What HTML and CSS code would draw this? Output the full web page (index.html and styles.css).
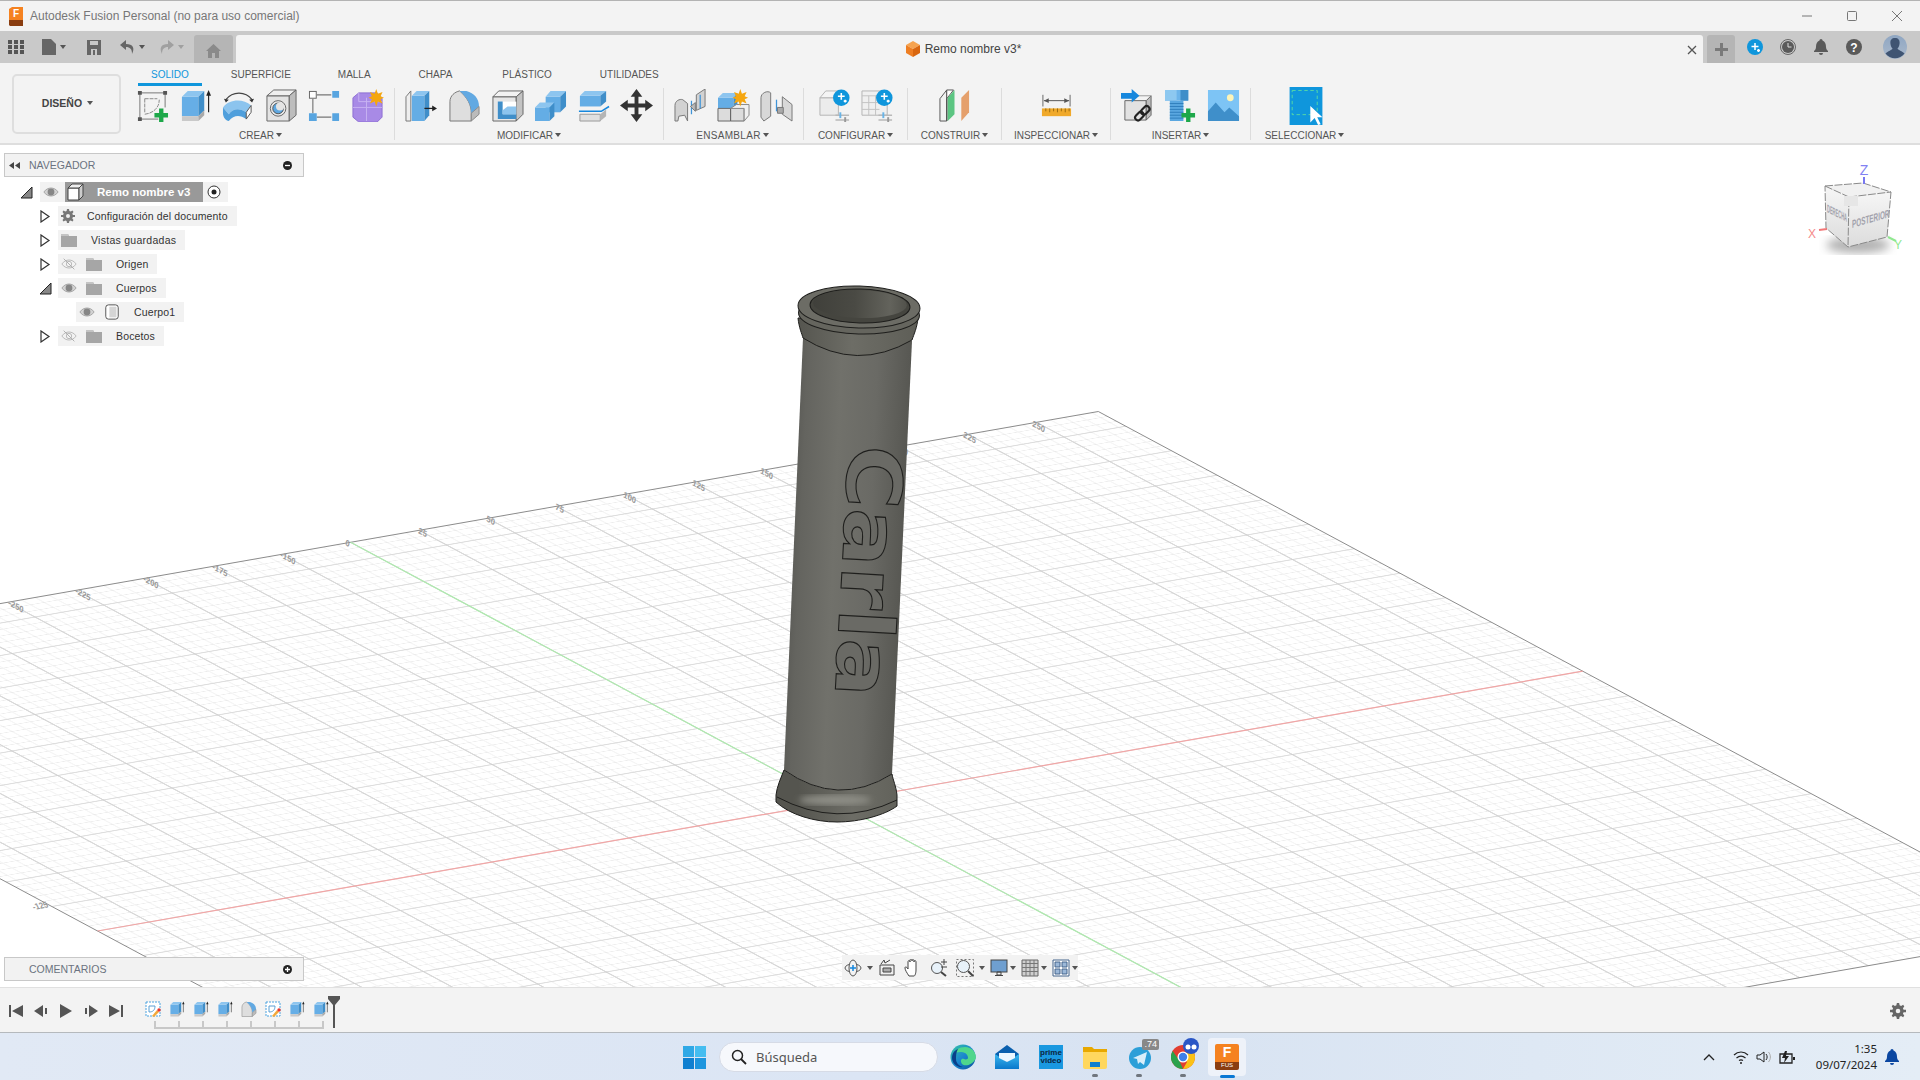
FILE: index.html
```html
<!DOCTYPE html>
<html lang="es">
<head>
<meta charset="utf-8">
<title>Autodesk Fusion Personal</title>
<link rel="stylesheet" href="styles.css">
</head>
<body>
<svg class="defs" width="0" height="0" aria-hidden="true">
  <defs>
    <linearGradient id="gBody" gradientUnits="userSpaceOnUse" x1="785" y1="560" x2="905" y2="565">
      <stop offset="0" stop-color="#575753"/><stop offset=".12" stop-color="#64645f"/><stop offset=".4" stop-color="#71716b"/><stop offset=".7" stop-color="#6a6a65"/><stop offset="1" stop-color="#565651"/>
    </linearGradient>
    <linearGradient id="gFlare" gradientUnits="userSpaceOnUse" x1="798" y1="330" x2="918" y2="330">
      <stop offset="0" stop-color="#55554f"/><stop offset=".45" stop-color="#6d6d66"/><stop offset="1" stop-color="#5e5e57"/>
    </linearGradient>
    <linearGradient id="gHole" gradientUnits="userSpaceOnUse" x1="810" y1="300" x2="910" y2="300">
      <stop offset="0" stop-color="#3f3f3a"/><stop offset=".45" stop-color="#4a4a44"/><stop offset=".8" stop-color="#63635c"/><stop offset="1" stop-color="#4e4e48"/>
    </linearGradient>
    <linearGradient id="gCube" x1="0" y1="0" x2="0" y2="1"><stop offset="0" stop-color="#f6f6f6"/><stop offset="1" stop-color="#dcdcdc"/></linearGradient>
    <linearGradient id="gEdge" x1="0" y1="0" x2="1" y2="1"><stop offset="0" stop-color="#36c7a4"/><stop offset=".5" stop-color="#1b86cf"/><stop offset="1" stop-color="#0c4f9c"/></linearGradient>
    <linearGradient id="gMail" x1="0" y1="0" x2="0" y2="1"><stop offset="0" stop-color="#3bb8ee"/><stop offset="1" stop-color="#0a78cc"/></linearGradient>
    <linearGradient id="gAvatar" x1="0" y1="0" x2="0" y2="1"><stop offset="0" stop-color="#8fa6c2"/><stop offset="1" stop-color="#aab9cc"/></linearGradient>
    <filter id="blur3"><feGaussianBlur stdDeviation="3"/></filter>
    <filter id="blur5"><feGaussianBlur stdDeviation="5"/></filter>

    <symbol id="i-sketch" viewBox="0 0 34 34"><path d="M4 4h26M4 4v27M4 31h19M30 4v15" stroke="#777" fill="none"/><path d="M2 2h4v4H2zM28 2h4v4h-4zM2 29h4v4H2z" fill="#555"/><path d="M9 10h13M9 10v14M9 26C18 25 24 19 24 11" stroke="#888" fill="none" stroke-dasharray="4 1"/><path d="M26 20v14M19 27h14" stroke="#1ea84a" stroke-width="4.500"/></symbol>
    <symbol id="i-extrude" viewBox="0 0 34 34"><path d="M3 8h17v20H3z" fill="#66aee6"/><path d="M3 8l6-6h17l-6 6z" fill="#8dc5ef"/><path d="M20 8l6-6v20l-6 6z" fill="#3f8ec9"/><path d="M3 28h17v5H3z" fill="#c9c9c9"/><path d="M20 28l6-6v5l-6 6z" fill="#a9a9a9"/><path d="M30.500 24V5" stroke="#222" stroke-width="1.200"/><path d="M28 7l2.500-6 2.500 6z" fill="#222"/></symbol>
    <symbol id="i-revolve" viewBox="0 0 34 34"><path d="M4 11C11 2 24 2 31 11" stroke="#444" fill="none" stroke-width="1.300"/><path d="M2 10l5 1-3 3zM33 10l-5 1 3 3z" fill="#333"/><path d="M1 19C8 10 22 10 30 17l-5 7C18 19 11 20 7 26z" fill="#8cc4ee"/><path d="M1 19l6 7 0 7C4 33 1 29 1 25zM7 26C11 20 18 19 25 24l0 7C18 26 12 27 7 33z" fill="#4f9fdc"/><path d="M25 24l5-7v7l-5 7z" fill="#fff" stroke="#555"/></symbol>
    <symbol id="i-hole" viewBox="0 0 34 34"><path d="M2 7h23v26H2z" fill="#e4e4e4" stroke="#666"/><path d="M2 7l7-6h23l-7 6z" fill="#f0f0f0" stroke="#666"/><path d="M25 7l7-6v26l-7 6z" fill="#bdbdbd" stroke="#666"/><circle cx="13.500" cy="20" r="8" fill="#e8e8e8" stroke="#666"/><circle cx="13.500" cy="20" r="5.500" fill="#5ea7e0" stroke="#555"/><circle cx="15.500" cy="18" r="4.200" fill="#e4e4e4"/></symbol>
    <symbol id="i-pattern" viewBox="0 0 34 34"><path d="M9 6h15M5 10v15M9 29h15" stroke="#777" stroke-width="1.200"/><rect x="1.500" y="2.500" width="7" height="7" fill="#fff" stroke="#666"/><path d="M25 2h7v7h-7zM1 25h8v8H1zM25 25h7v8h-7z" fill="#58a5e0"/></symbol>
    <symbol id="i-form" viewBox="0 0 34 34"><path d="M2 9l6-5h19l5 6v19l-5 5H8l-6-5z" fill="#a88ae6" stroke="#8d6fd3"/><path d="M2 19h30M16 9v24M8 4v9h24" stroke="#c7b2f2" fill="none"/><path d="M26 0l1.700 5 4.800-2-2 4.500 3.500 1.500-3.500 1.500 2 4.500-4.800-2L26 18l-1.700-5-4.800 2 2-4.500L18 9l3.500-1.500-2-4.500 4.800 2z" fill="#f5a60f"/></symbol>
    <symbol id="i-press" viewBox="0 0 34 34"><path d="M1 8l5-6v31H1z" fill="#eee" stroke="#777"/><path d="M7 7h13v26H7z" fill="#64ade5"/><path d="M7 7l5-5h13l-5 5z" fill="#8dc5ef"/><path d="M20 7l5-5v25l-5 6z" fill="#3f8ec9"/><path d="M20 20h10" stroke="#222" stroke-width="1.300"/><path d="M28 17l5 3-5 3z" fill="#222"/></symbol>
    <symbol id="i-fillet" viewBox="0 0 34 34"><path d="M2 33V13C2 7 7 3 12 2C20 9 24 16 24 25V33Z" fill="#dedede" stroke="#777"/><path d="M12 2h7C27 4 32 10 32 18L24 25C24 16 20 9 12 2Z" fill="#62a9e2"/><path d="M24 25L32 18V26L24 33Z" fill="#bbb" stroke="#888"/></symbol>
    <symbol id="i-shell" viewBox="0 0 34 34"><path d="M2 8h24v25H2z" fill="#e6e6e6" stroke="#666"/><path d="M2 8l6-6h25l-7 6z" fill="#f2f2f2" stroke="#666"/><path d="M26 8l7-6v24l-7 7z" fill="#c3c3c3" stroke="#666"/><path d="M7 13h19v18H7z" fill="#fff"/><path d="M7 13h5v13h14v5H7z" fill="#3f8ec9"/><path d="M12 22l5-4h9v8H12z" fill="#8cc4ee"/></symbol>
    <symbol id="i-combine" viewBox="0 0 34 34"><path d="M12 8h15v16H12z" fill="#64ade5"/><path d="M12 8l5-6h16l-6 6z" fill="#8dc5ef"/><path d="M27 8l6-6v16l-6 6z" fill="#3f8ec9"/><path d="M1 19h15v14H1z" fill="#64ade5"/><path d="M1 19l5-5h15l-5 5z" fill="#8dc5ef"/><path d="M16 19l5-5v14l-5 5z" fill="#3f8ec9"/></symbol>
    <symbol id="i-split" viewBox="0 0 34 34"><path d="M3 7h21v11H3z" fill="#64ade5"/><path d="M3 7l5-5h22l-6 5z" fill="#8dc5ef"/><path d="M24 7l6-5v11l-6 5z" fill="#3f8ec9"/><path d="M2 23h23l8-5" stroke="#1687dd" stroke-width="1.600" fill="none"/><path d="M3 26h21v7H3z" fill="#e0e0e0" stroke="#999"/><path d="M24 26l6-5v7l-6 5z" fill="#b5b5b5"/></symbol>
    <symbol id="i-move" viewBox="0 0 34 34"><path d="M17 0l6 8h-4v7h7v-4l8 6-8 6v-4h-7v7h4l-6 8-6-8h4v-7H8v4l-8-6 8-6v4h7V8h-4z" fill="#333"/></symbol>
    <symbol id="i-joint" viewBox="0 0 34 34"><path d="M1 33V17c0-5 5-7 8-6l5 4v18l-3-6-6 1-1 5z" fill="#d2d2d2" stroke="#777"/><path d="M23 22V6l9-6v18z" fill="#d2d2d2" stroke="#777"/><path d="M18 12v14M27 6v14" stroke="#3f94d8" stroke-width="1.300"/><path d="M17 18l5-4 0 9z" fill="#bbb" stroke="#777"/></symbol>
    <symbol id="i-newcomp" viewBox="0 0 34 34"><path d="M1 9h16v11H1z" fill="#64ade5"/><path d="M1 9l5-5h15l-4 5z" fill="#8dc5ef"/><path d="M17 9l4-5v12l-4 4z" fill="#3f8ec9"/><path d="M1 20h13v13H1zM14 20h14v13H14z" fill="#dcdcdc" stroke="#666"/><path d="M14 20l6-4h13v11l-5 6V20z" fill="#f0f0f0" stroke="#888"/><path d="M24 0l1.700 5 4.800-2-2 4.500 3.500 1.500-3.500 1.500 2 4.500-4.800-2L24 18l-1.700-5-4.800 2 2-4.500L16 9l3.500-1.500-2-4.500 4.800 2z" fill="#f5a60f"/></symbol>
    <symbol id="i-joint2" viewBox="0 0 34 34"><path d="M1 29V9c0-5 7-8 10-5v24l-7 5z" fill="#d8d8d8" stroke="#777"/><path d="M23 8l10 8v17l-10-7z" fill="#d8d8d8" stroke="#777"/><path d="M17 11v12" stroke="#3f94d8" stroke-width="1.300"/><path d="M18 19h6v6h-6z" fill="#aaa" stroke="#777"/></symbol>
    <symbol id="i-config" viewBox="0 0 34 34"><path d="M2 9h19v18H2z" fill="#ececec" stroke="#b5b5b5"/><path d="M2 9l6-7h17l-4 7z" fill="#f4f4f4" stroke="#b5b5b5"/><circle cx="24" cy="9" r="8.500" fill="#0f96dc"/><path d="M24 4v7M20.500 7.500h7M28 11v3M26.500 12.500h3" stroke="#fff" stroke-width="1.600"/><path d="M18 27h14M18 32h14" stroke="#b9b9b9" stroke-width="1.500"/><path d="M23 24v6" stroke="#69b4e6" stroke-width="2"/><path d="M28 29v5" stroke="#999" stroke-width="2"/></symbol>
    <symbol id="i-table" viewBox="0 0 34 34"><path d="M1 2h26v25H1z" fill="#f0f0f0" stroke="#b5b5b5"/><path d="M1 7h26M1 14h22M1 21h18M8 7v20M15 7v20" stroke="#c2c2c2" fill="none"/><circle cx="24" cy="9" r="8.500" fill="#0f96dc"/><path d="M24 4v7M20.500 7.500h7M28 11v3M26.500 12.500h3" stroke="#fff" stroke-width="1.600"/><path d="M18 27h14M18 32h14" stroke="#b9b9b9" stroke-width="1.500"/><path d="M23 24v6" stroke="#69b4e6" stroke-width="2"/><path d="M28 29v5" stroke="#999" stroke-width="2"/></symbol>
    <symbol id="i-plane" viewBox="0 0 34 34"><path d="M2 10L9 1v32H2z" fill="#f2f2f2" stroke="#555"/><path d="M9 1h7L9 10v23h0z" fill="#fff" stroke="#555"/><path d="M10 9l7-8 0 25-7 7z" fill="#5cc582"/><path d="M24 9l8-8v23l-8 9z" fill="#e5a06c"/></symbol>
    <symbol id="i-measure" viewBox="0 0 34 34"><path d="M3 6v12M31 6v12" stroke="#666"/><path d="M4 12h26" stroke="#555"/><path d="M4 12l5-2.500v5zM30 12l-5-2.500v5z" fill="#555"/><path d="M2 20h30v8H2z" fill="#f0a92a"/><path d="M6 20v3M10 20v4M14 20v3M18 20v4M22 20v3M26 20v4M30 20v3" stroke="#9a6a10"/></symbol>
    <symbol id="i-insert" viewBox="0 0 34 34"><path d="M4 12h22v20H4z" fill="#e2e2e2" stroke="#666"/><path d="M26 12l5-5v20l-5 5z" fill="#bdbdbd" stroke="#666"/><path d="M9 7h22" stroke="#999"/><path d="M0 4h11V0l8 7-8 7V10H0z" fill="#1687dd"/><g fill="none" stroke="#222" stroke-width="2.200"><rect x="14" y="25" width="10" height="6" rx="3" transform="rotate(-45 19 28)"/><rect x="20" y="19" width="10" height="6" rx="3" transform="rotate(-45 25 22)"/></g></symbol>
    <symbol id="i-bolt" viewBox="0 0 34 34"><path d="M1 1h24v11H1z" fill="#6cb4ea"/><path d="M1 1h12v11H1z" fill="#8dc8f0"/><path d="M17 1h8v11h-8z" fill="#3f8ec9"/><path d="M6 12h14v21H6z" fill="#5aa7e0"/><path d="M6 15h14M6 18h14M6 21h14M6 24h14M6 27h14M6 30h14" stroke="#2f7ebb"/><path d="M25 20v14M18 27h14" stroke="#1ea84a" stroke-width="4.500"/></symbol>
    <symbol id="i-image" viewBox="0 0 34 34"><path d="M1 1h32v32H1z" fill="#7dc4f5"/><circle cx="24" cy="9" r="3.500" fill="#fdf4b8"/><path d="M1 33V23l8-9 9 10 5-5 10 9v5z" fill="#3f8fca"/></symbol>
    <symbol id="i-eye" viewBox="0 0 18 12"><path d="M1 6c4-6 12-6 16 0-4 6-12 6-16 0z" fill="#d2d2d2" stroke="#a0a0a0"/><circle cx="9" cy="6" r="3.800" fill="#868686"/></symbol>
    <symbol id="i-eyeoff" viewBox="0 0 18 12"><path d="M1 6c4-6 12-6 16 0-4 6-12 6-16 0z" fill="none" stroke="#b4b4b4"/><circle cx="9" cy="6" r="3" fill="none" stroke="#b4b4b4"/><path d="M3 0l12 12" stroke="#a8a8a8"/></symbol>
    <symbol id="i-folder" viewBox="0 0 16 13"><path d="M0 0h7l1 2h8v11H0z" fill="#a6a6a6"/><path d="M0 0h7l1 2H0z" fill="#c4c4c4"/></symbol>
    <symbol id="i-open" viewBox="0 0 13 13"><path d="M1 12L12 1v11z" fill="#888" stroke="#222"/></symbol>
    <symbol id="i-closed" viewBox="0 0 13 13"><path d="M2 1l8 5.500L2 12z" fill="#fff" stroke="#333" stroke-width="1.200"/></symbol>
    <symbol id="i-tlsketch" viewBox="0 0 16 16"><path d="M1 1h14v14H1z" fill="#fff" stroke="#4aa3e0" stroke-dasharray="2 1"/><path d="M4 5h6M4 5v6M4 11c4 0 6-2 6-6" stroke="#5a9fd4" fill="none"/><path d="M7 15l5-6 2 2-5 5z" fill="#f2a93b"/><circle cx="14" cy="9" r="1.700" fill="#e8352e"/></symbol>
  </defs>
</svg>

<header class="titlebar">
  <svg class="fus-small" viewBox="0 0 16 19"><path d="M1 2l3-2h11v13H1z" fill="#f58220"/><path d="M1 13h14v6H2l-1-1z" fill="#8a3d10"/><text x="8" y="10" class="fus-letter">F</text></svg>
  <span class="apptitle">Autodesk Fusion Personal (no para uso comercial)</span>
  <div class="winctrl">
    <svg width="12" height="12" viewBox="0 0 12 12"><path d="M1 6h10" stroke="#777"/></svg>
    <svg width="12" height="12" viewBox="0 0 12 12"><rect x="1.500" y="1.500" width="9" height="9" rx="1" fill="none" stroke="#777"/></svg>
    <svg width="12" height="12" viewBox="0 0 12 12"><path d="M1 1l10 10M11 1L1 11" stroke="#777"/></svg>
  </div>
</header>

<div class="tabbar">
  <div class="qat">
    <svg width="16" height="14" viewBox="0 0 16 14"><path d="M0 0h4v4H0zM6 0h4v4H6zM12 0h4v4h-4zM0 5h4v4H0zM6 5h4v4H6zM12 5h4v4h-4zM0 10h4v4H0zM6 10h4v4H6zM12 10h4v4h-4z" fill="#555"/></svg>
    <svg class="q-file" width="14" height="16" viewBox="0 0 14 16"><path d="M0 0h9l5 5v11H0z" fill="#666"/></svg>
    <span class="caret dark"></span>
    <svg class="q-save" width="14" height="15" viewBox="0 0 14 15"><path d="M0 0h14v15H0z" fill="#666"/><path d="M3 1h8v4H3zM4 9h6v6H4z" fill="#c8c8c8"/><path d="M6 10h2v5H6z" fill="#666"/></svg>
    <svg class="q-undo" width="15" height="14" viewBox="0 0 15 14"><path d="M6 0L0 5l6 5V7c4 0 6 2 6 7 3-6 1-10-6-10z" fill="#666"/></svg>
    <span class="caret dark"></span>
    <svg class="q-redo" width="15" height="14" viewBox="0 0 15 14"><path d="M9 0l6 5-6 5V7c-4 0-6 2-6 7C0 8 2 4 9 4z" fill="#a0a0a0"/></svg>
    <span class="caret light"></span>
  </div>
  <div class="hometab"><svg width="15" height="14" viewBox="0 0 15 14"><path d="M7.500 0L0 7h2v7h4V9h3v5h4V7h2z" fill="#8a8a8a"/></svg></div>
  <div class="doctab">
    <div class="doctitle">
      <svg width="14" height="16" viewBox="0 0 14 16"><path d="M7 0l7 4-7 4-7-4z" fill="#f6a34f"/><path d="M0 4l7 4v8l-7-4z" fill="#ee7e22"/><path d="M14 4L7 8v8l7-4z" fill="#d9660f"/></svg>
      <span>Remo nombre v3*</span>
    </div>
    <svg class="docclose" width="10" height="10" viewBox="0 0 10 10"><path d="M1 1l8 8M9 1L1 9" stroke="#555" stroke-width="1.300"/></svg>
  </div>
  <div class="plustab"><svg width="13" height="13" viewBox="0 0 13 13"><path d="M6.500 0v13M0 6.500h13" stroke="#7a7a7a" stroke-width="3"/></svg></div>
  <div class="rightbar">
    <svg width="16" height="16" viewBox="0 0 16 16"><circle cx="8" cy="8" r="8" fill="#0f96dc"/><path d="M8 4v7M4.500 7.500h7M11.500 10v3M10 11.500h3" stroke="#fff" stroke-width="1.500"/></svg>
    <svg width="16" height="16" viewBox="0 0 16 16"><circle cx="8" cy="8" r="7.500" fill="none" stroke="#666"/><circle cx="8" cy="8" r="6" fill="#5a5a5a"/><path d="M8 4v4h3.500" stroke="#ddd" fill="none"/></svg>
    <svg width="16" height="16" viewBox="0 0 16 16"><path d="M8 0c1 0 1.500 1 1.500 1.500C12 2.500 13 5 13 8c0 2 1 3 2 4v1H1v-1c1-1 2-2 2-4 0-3 1-5.500 3.500-6.500C6.500 1 7 0 8 0zM6 14h4a2 2 0 0 1-4 0z" fill="#5a5a5a"/></svg>
    <svg width="16" height="16" viewBox="0 0 16 16"><circle cx="8" cy="8" r="8" fill="#5a5a5a"/><text x="8" y="12.500" class="help">?</text></svg>
    <svg class="avatar" width="24" height="24" viewBox="0 0 24 24"><circle cx="12" cy="12" r="12" fill="url(#gAvatar)"/><path d="M12 3c4 0 5 3 4.500 6-.3 2-1 3.500-2 4.500 0 1.500 5 2.500 7 5A12 12 0 0 1 2.500 18.500c2-2.500 7-3.500 7-5-1-1-1.700-2.500-2-4.500C7 6 8 3 12 3z" fill="#3f5472"/></svg>
  </div>
</div>

<section class="ribbon">
  <button class="design">DISEÑO <span class="caret dark"></span></button>
  <div class="ribbon-main">
    <nav class="tabs">
      <span class="tab active">SOLIDO</span><span class="tab">SUPERFICIE</span><span class="tab">MALLA</span><span class="tab">CHAPA</span><span class="tab">PLÁSTICO</span><span class="tab">UTILIDADES</span>
    </nav>
    <div class="groups">
      <div class="group g-create">
        <div class="tools">
          <svg class="tool"><use href="#i-sketch"/></svg><svg class="tool"><use href="#i-extrude"/></svg><svg class="tool"><use href="#i-revolve"/></svg><svg class="tool"><use href="#i-hole"/></svg><svg class="tool"><use href="#i-pattern"/></svg><svg class="tool"><use href="#i-form"/></svg>
        </div>
        <div class="glabel">CREAR <span class="caret dark"></span></div>
      </div>
      <div class="group g-modify">
        <div class="tools">
          <svg class="tool"><use href="#i-press"/></svg><svg class="tool"><use href="#i-fillet"/></svg><svg class="tool"><use href="#i-shell"/></svg><svg class="tool"><use href="#i-combine"/></svg><svg class="tool"><use href="#i-split"/></svg><svg class="tool"><use href="#i-move"/></svg>
        </div>
        <div class="glabel">MODIFICAR <span class="caret dark"></span></div>
      </div>
      <div class="group g-assemble">
        <div class="tools">
          <svg class="tool"><use href="#i-joint"/></svg><svg class="tool"><use href="#i-newcomp"/></svg><svg class="tool"><use href="#i-joint2"/></svg>
        </div>
        <div class="glabel">ENSAMBLAR <span class="caret dark"></span></div>
      </div>
      <div class="group g-config">
        <div class="tools">
          <svg class="tool"><use href="#i-config"/></svg><svg class="tool"><use href="#i-table"/></svg>
        </div>
        <div class="glabel">CONFIGURAR <span class="caret dark"></span></div>
      </div>
      <div class="group g-construct">
        <div class="tools"><svg class="tool"><use href="#i-plane"/></svg></div>
        <div class="glabel">CONSTRUIR <span class="caret dark"></span></div>
      </div>
      <div class="group g-inspect">
        <div class="tools"><svg class="tool"><use href="#i-measure"/></svg></div>
        <div class="glabel">INSPECCIONAR <span class="caret dark"></span></div>
      </div>
      <div class="group g-insert">
        <div class="tools">
          <svg class="tool"><use href="#i-insert"/></svg><svg class="tool"><use href="#i-bolt"/></svg><svg class="tool"><use href="#i-image"/></svg>
        </div>
        <div class="glabel">INSERTAR <span class="caret dark"></span></div>
      </div>
      <div class="group g-select">
        <div class="tools">
          <svg class="tool-select" viewBox="0 0 38 44"><path d="M0 0h38v44H0z" fill="#0f96dc"/><path d="M3 4h29v28H3z" fill="none" stroke="#5ee0a0" stroke-dasharray="4 3"/><path d="M24 22l0 19 5-5 4 8 3-1-4-8 6 0z" fill="#fff"/></svg>
        </div>
        <div class="glabel">SELECCIONAR <span class="caret dark"></span></div>
      </div>
    </div>
  </div>
</section>

<main class="viewport">
  <svg class="scene" viewBox="0 145 1920 842" width="1920" height="842">
    <defs>
      <pattern id="pMinor" x="-.1" y="-.1" width=".2" height=".2" patternUnits="userSpaceOnUse"><path d="M0 .1H.2M.1 0V.2" stroke="#e9e9e9" stroke-width=".014" fill="none"/></pattern>
      <pattern id="pMajor" x="-.5" y="-.5" width="1" height="1" patternUnits="userSpaceOnUse"><path d="M0 .5H1M.5 0V1" stroke="#cdcdcd" stroke-width=".02" fill="none"/></pattern>
    </defs>
    <g transform="matrix(68.6 -12 45.7 24.5 835 802)">
      <rect x="-10.750" y="-10.600" width="21.650" height="21.200" fill="#fff"/>
      <rect x="-10.750" y="-10.600" width="21.650" height="21.200" fill="url(#pMinor)"/>
      <rect x="-10.750" y="-10.600" width="21.650" height="21.200" fill="url(#pMajor)"/>
      <rect class="gridedge" x="-10.750" y="-10.600" width="21.650" height="21.200"/>
      <path class="axis-red" d="M-10.750 0H10.900"/>
      <path class="axis-green" d="M0 -10.600V10.600"/>
    </g>
    <g class="gridlabels">
      <text transform="matrix(.88 .47 -.17 .98 8 605)">-250</text>
      <text transform="matrix(.88 .47 -.17 .98 75 593)">-225</text>
      <text transform="matrix(.88 .47 -.17 .98 143 581)">-200</text>
      <text transform="matrix(.88 .47 -.17 .98 212 569)">-175</text>
      <text transform="matrix(.88 .47 -.17 .98 280 557)">-150</text>
      <text transform="matrix(.88 .47 -.17 .98 345 545)">0</text>
      <text transform="matrix(.88 .47 -.17 .98 418 533)">25</text>
      <text transform="matrix(.88 .47 -.17 .98 486 521)">50</text>
      <text transform="matrix(.88 .47 -.17 .98 555 509)">75</text>
      <text transform="matrix(.88 .47 -.17 .98 623 497)">100</text>
      <text transform="matrix(.88 .47 -.17 .98 692 485)">125</text>
      <text transform="matrix(.88 .47 -.17 .98 760 473)">150</text>
      <text transform="matrix(.88 .47 -.17 .98 895 449)">200</text>
      <text transform="matrix(.88 .47 -.17 .98 963 437)">225</text>
      <text transform="matrix(.88 .47 -.17 .98 1032 426)">250</text>
      <text transform="matrix(.88 -.17 .47 .98 34 910)">-125</text>
      <text transform="matrix(.88 -.17 .47 .98 172 980)">-50</text>
    </g>

    <!-- tube -->
    <path d="M803 338L784 770Q838 808 892 774L912 341Z" fill="url(#gBody)"/>
    <path d="M784 770C781 778 777 786 776 795V802C790 815 815 822 837 822C860 822 885 815 897 806V795C896 786 893 780 892 774Q838 808 784 770Z" fill="url(#gFlare)" stroke="#1e1e1c"/>
    <ellipse cx="835" cy="800" rx="36" ry="5" fill="#8f8f87" filter="url(#blur3)"/>
    <path d="M777 797Q837 829 897 800" fill="none" stroke="#1e1e1c"/>
    <path d="M798 318C799 328 802 334 803 338Q857 372 912 340C914 334 917 328 918 318Z" fill="url(#gFlare)" stroke="#1e1e1c"/>
    <ellipse cx="859" cy="314" rx="60.500" ry="20" fill="#65655e" stroke="#1e1e1c" transform="rotate(1.500 859 314)"/>
    <ellipse cx="859" cy="307" rx="61" ry="21" fill="#6c6c65" stroke="#1e1e1c" transform="rotate(1.500 859 307)"/>
    <ellipse cx="860" cy="306" rx="50" ry="17" fill="#45453f" stroke="#1e1e1c" transform="rotate(1.500 860 306)"/>
    <ellipse cx="860" cy="304" rx="47" ry="14" fill="url(#gHole)" transform="rotate(1.500 860 304)"/>
    <text class="carla" transform="translate(849 444) rotate(93.200)" textLength="252" lengthAdjust="spacingAndGlyphs">Carla</text>

    <!-- view cube -->
    <ellipse cx="1858" cy="245" rx="32" ry="8" fill="#b0b0b0" filter="url(#blur5)"/>
    <path d="M1825 186l24 11-1 50-22-19z" fill="url(#gCube)"/>
    <path d="M1849 197l42-5-4 45-39 10z" fill="url(#gCube)"/>
    <path d="M1825 186l38-3 28 9-42 5z" fill="#f1f1f1"/>
    <path d="M1825 186l38-3 28 9-4 45-39 10-22-19zM1825 186l24 11-1 50M1849 197l42-5" class="cube-edge"/>
    <path d="M1844 196h14v10h-14z" fill="#e6e6e6"/>
    <text class="cube-label" transform="matrix(.96 -.28 0 1.400 1852 228)" textLength="39" lengthAdjust="spacingAndGlyphs">POSTERIOR</text>
    <text class="cube-label" transform="matrix(.8 .4 0 1.400 1827 212)" textLength="25" lengthAdjust="spacingAndGlyphs">DERECHA</text>
    <path d="M1864 184v-7" stroke="#7878f0" stroke-width="2"/>
    <path d="M1819 230l8-1" stroke="#f27878" stroke-width="2"/>
    <path d="M1888 237l8 4" stroke="#8fe88f" stroke-width="2"/>
    <text class="axlabel ax-z" x="1864" y="175">Z</text>
    <text class="axlabel ax-x" x="1812" y="238">X</text>
    <text class="axlabel ax-y" x="1898" y="249">Y</text>
  </svg>

  <div class="panel nav-panel">
    <svg width="11" height="7" viewBox="0 0 11 7"><path d="M5 0v7L0 3.500zM11 0v7L6 3.500z" fill="#444"/></svg>
    <span class="ptitle">NAVEGADOR</span>
    <svg class="pbtn" width="9" height="9" viewBox="0 0 9 9"><circle cx="4.500" cy="4.500" r="4.500" fill="#222"/><path d="M2 4.500h5" stroke="#fff" stroke-width="1.300"/></svg>
  </div>

  <ul class="tree">
    <li class="row r0"><svg class="arrow"><use href="#i-open"/></svg>
      <div class="pill p-root"><svg class="eye"><use href="#i-eye"/></svg>
        <span class="rootlabel"><svg class="cubeico" viewBox="0 0 18 18"><path d="M2 5h11v12H2z" fill="#fff" stroke="#444"/><path d="M2 5l4-4h11l-4 4z" fill="#eee" stroke="#444"/><path d="M13 5l4-4v12l-4 4z" fill="#ccc" stroke="#444"/></svg><b>Remo nombre v3</b></span>
        <svg class="radio" width="14" height="14" viewBox="0 0 14 14"><circle cx="7" cy="7" r="6" fill="#fff" stroke="#333"/><circle cx="7" cy="7" r="2.500" fill="#222"/></svg>
      </div></li>
    <li class="row r1"><svg class="arrow"><use href="#i-closed"/></svg>
      <div class="pill"><svg class="gear" width="14" height="14" viewBox="0 0 14 14"><path d="M6 0h2l.4 2 1.300.6L11.500 1.500 12.500 3 11.300 4.500l.6 1.500H14v2h-2.100l-.6 1.500 1.200 1.500-1 1.500-1.800-1.100-1.300.6L8 14H6l-.4-2-1.300-.6-1.800 1.100-1-1.500 1.200-1.500L2.100 8H0V6h2.100l.6-1.500L1.500 3l1-1.500 1.800 1.100L5.600 2z" fill="#777"/><circle cx="7" cy="7" r="2" fill="#eee"/></svg><span class="lbl l-config">Configuración del documento</span></div></li>
    <li class="row r1"><svg class="arrow"><use href="#i-closed"/></svg>
      <div class="pill"><svg class="folder f0"><use href="#i-folder"/></svg><span class="lbl l-vistas">Vistas guardadas</span></div></li>
    <li class="row r1"><svg class="arrow"><use href="#i-closed"/></svg>
      <div class="pill"><svg class="eye e1"><use href="#i-eyeoff"/></svg><svg class="folder"><use href="#i-folder"/></svg><span class="lbl">Origen</span></div></li>
    <li class="row r1"><svg class="arrow"><use href="#i-open"/></svg>
      <div class="pill"><svg class="eye e1"><use href="#i-eye"/></svg><svg class="folder"><use href="#i-folder"/></svg><span class="lbl">Cuerpos</span></div></li>
    <li class="row r2">
      <div class="pill"><svg class="eye e1"><use href="#i-eye"/></svg><svg class="folder bodyico" viewBox="0 0 16 18"><rect x="1" y="1" width="14" height="16" rx="3" fill="#fff" stroke="#444"/><path d="M5 3h8v12H5z" fill="#d5d5d5"/></svg><span class="lbl">Cuerpo1</span></div></li>
    <li class="row r1"><svg class="arrow"><use href="#i-closed"/></svg>
      <div class="pill"><svg class="eye e1"><use href="#i-eyeoff"/></svg><svg class="folder"><use href="#i-folder"/></svg><span class="lbl">Bocetos</span></div></li>
  </ul>

  <div class="panel comments-panel">
    <span class="ptitle">COMENTARIOS</span>
    <svg class="pbtn" width="9" height="9" viewBox="0 0 9 9"><circle cx="4.500" cy="4.500" r="4.500" fill="#222"/><path d="M2 4.500h5M4.500 2v5" stroke="#fff" stroke-width="1.300"/></svg>
  </div>

  <div class="vnav">
    <svg class="vn" viewBox="0 0 18 18"><ellipse cx="9" cy="9" rx="8" ry="4" fill="none" stroke="#555"/><ellipse cx="9" cy="9" rx="4" ry="8" fill="#f3f3f3" stroke="#555"/><path d="M9 6v6M6 9h6" stroke="#1687dd" stroke-width="1.500"/></svg><span class="caret dark"></span>
    <svg class="vn" viewBox="0 0 18 18"><path d="M2 6h14v10H2z" fill="#eee" stroke="#444"/><path d="M5 9h8v4H5z" fill="#aaa" stroke="#444"/><path d="M3 5l3-4 1 3 5-3" stroke="#444" fill="none"/></svg>
    <svg class="vn m3" viewBox="0 0 18 18"><path d="M5 17c-2-3-4-6-4-8s2-1 3 1V3c0-2 2-2 2 0V1.500c0-2 2-2 2 0V2c0-2 2-2 2 0v1c0-2 2-2 2 0v8c0 3-1 6-2 6z" fill="#fff" stroke="#444"/></svg>
    <svg class="vn m3" viewBox="0 0 18 18"><circle cx="7" cy="9" r="5.500" fill="#e8f2fa" stroke="#555"/><path d="M11 13l5 4" stroke="#444" stroke-width="2"/><path d="M11 3h6M14 0v6M11 8h6" stroke="#444"/></svg>
    <svg class="vn m3" viewBox="0 0 18 18"><rect x=".5" y=".5" width="17" height="17" fill="none" stroke="#777" stroke-dasharray="2 2"/><circle cx="7.500" cy="7.500" r="6" fill="#e8f2fa" stroke="#555"/><path d="M12 12l5 5" stroke="#444" stroke-width="2"/></svg><span class="caret dark"></span>
    <svg class="vn" viewBox="0 0 18 18"><rect x="1" y="1" width="16" height="12" fill="#6f9fd0" stroke="#444"/><path d="M7 13h4v3H7zM5 16.500h8" stroke="#444" fill="none"/></svg><span class="caret dark narrow"></span>
    <svg class="vn" viewBox="0 0 18 18"><path d="M1 1h16v16H1z" fill="#cfcfcf" stroke="#666"/><path d="M1 4.500h16M1 8.500h16M1 12.500h16M5 1v16M9 1v16M13 1v16" stroke="#777"/></svg><span class="caret dark narrow"></span>
    <svg class="vn" viewBox="0 0 18 18"><path d="M1 1h16v16H1z" fill="#fff" stroke="#44648c"/><path d="M3 3h5v5H3zM10 3h5v5h-5zM3 10h5v5H3zM10 10h5v5h-5z" fill="#9cb8d8" stroke="#44648c"/></svg><span class="caret dark narrow"></span>
  </div>
</main>

<section class="timeline">
  <div class="player">
    <svg viewBox="0 0 14 14"><path d="M0 1h2v12H0zM14 1v12L3 7z" fill="#555"/></svg>
    <svg viewBox="0 0 14 14"><path d="M9 1v12L0 7zM11 4h2v6h-2z" fill="#555"/></svg>
    <svg viewBox="0 0 14 14"><path d="M1 0l12 7-12 7z" fill="#555"/></svg>
    <svg viewBox="0 0 14 14"><path d="M5 1v12l9-6zM1 4h2v6H1z" fill="#555"/></svg>
    <svg viewBox="0 0 14 14"><path d="M12 1h2v12h-2zM0 1v12l11-6z" fill="#555"/></svg>
  </div>
  <div class="history">
    <div class="hist-icons">
      <svg><use href="#i-tlsketch"/></svg><svg><use href="#i-extrude"/></svg><svg><use href="#i-extrude"/></svg><svg><use href="#i-extrude"/></svg><svg><use href="#i-fillet"/></svg><svg><use href="#i-tlsketch"/></svg><svg><use href="#i-extrude"/></svg><svg><use href="#i-extrude"/></svg>
    </div>
    <svg class="bracket" viewBox="0 0 170 8"><path d="M1 0v7h168V0M25 0v7M49 0v7M73 0v7M97 0v7M121 0v7M145 0v7" fill="none" stroke="#c8c8c8" stroke-width="2"/></svg>
  </div>
  <svg class="marker" width="12" height="32" viewBox="0 0 12 32"><path d="M0 0h12v3L7 9v23H5V9L0 3z" fill="#555"/></svg>
  <svg class="gear-right" width="16" height="16" viewBox="0 0 14 14"><path d="M6 0h2l.4 2 1.300.6L11.500 1.500 12.500 3 11.300 4.500l.6 1.500H14v2h-2.100l-.6 1.500 1.200 1.500-1 1.500-1.800-1.100-1.300.6L8 14H6l-.4-2-1.300-.6-1.800 1.100-1-1.500 1.200-1.500L2.100 8H0V6h2.100l.6-1.500L1.500 3l1-1.500 1.800 1.100L5.600 2z" fill="#666"/><circle cx="7" cy="7" r="2" fill="#f3f3f3"/></svg>
</section>

<footer class="taskbar">
  <svg class="winlogo" viewBox="0 0 23 23"><path d="M0 0h11v11H0z" fill="#2fa8e6"/><path d="M12 0h11v11H12z" fill="#45bdf0"/><path d="M0 12h11v11H0z" fill="#0f7fd0"/><path d="M12 12h11v11H12z" fill="#1d95de"/></svg>
  <div class="search">
    <svg width="16" height="16" viewBox="0 0 16 16"><circle cx="6.500" cy="6.500" r="5" fill="none" stroke="#222" stroke-width="1.500"/><path d="M10 10l5 5" stroke="#222" stroke-width="1.800"/></svg>
    <span>Búsqueda</span>
  </div>
  <div class="apps">
    <div class="app"><svg width="26" height="26" viewBox="0 0 26 26"><circle cx="13" cy="13" r="12.500" fill="url(#gEdge)"/><path d="M26 14c0-6-4-11-11-11C9 3 5 6 4 10c3-3 14-3 14 4 0 1-2 2-4 1-3-1-4 2-2 5 3 3 11 1 14-6z" fill="#4fd68c"/><path d="M6 15c0 4 3 7 7 8-6 1-11-4-11-9s3-8 6-9c-2 3-2 7-2 10z" fill="#0a3f8a"/></svg></div>
    <div class="app"><svg width="26" height="24" viewBox="0 0 26 24"><path d="M13 0l12 9v15H1V9z" fill="#0a5fae"/><path d="M1 9l12 8 12-8v15H1z" fill="url(#gMail)"/><path d="M5 8h16v5l-8 4-8-4z" fill="#eaf6ff"/></svg></div>
    <div class="app"><div class="prime"><span>prime<br>video</span></div></div>
    <div class="app"><svg width="26" height="24" viewBox="0 0 26 24"><path d="M1 2h9l2 2h13v18H1z" fill="#e8a800"/><path d="M1 7h24v15c0 1-1 2-2 2H3c-1 0-2-1-2-2z" fill="#ffd75e"/><path d="M8 17h10v5H8z" fill="#0f7fd0"/></svg><i class="dot"></i></div>
    <div class="app"><svg class="tg" width="24" height="24" viewBox="0 0 24 24"><circle cx="11" cy="13" r="11" fill="#2c9fd8"/><path d="M4 13l14-6-3 13-4-3-2 2-1-5z" fill="#d8eefa"/></svg><span class="badge">.74</span><i class="dot"></i></div>
    <div class="app"><svg width="24" height="24" viewBox="0 0 24 24"><circle cx="12" cy="12" r="12" fill="#e23e31"/><path d="M12 24A12 12 0 0 1 1.600 6L8 15l4 9z" fill="#2ba24c"/><path d="M12 24c7 0 12-5 12-12 0-2-.5-3-1-4H12l4 9z" fill="#fbc116"/><circle cx="12" cy="12" r="5.500" fill="#fff"/><circle cx="12" cy="12" r="4.200" fill="#3f7fe8"/></svg><svg class="chromebadge" width="16" height="16" viewBox="0 0 16 16"><circle cx="8" cy="8" r="8" fill="#2a56c6"/><circle cx="5" cy="9" r="2.500" fill="#fff"/><circle cx="11" cy="9" r="2.500" fill="#fff"/></svg><i class="dot"></i></div>
    <div class="app active"><div class="fusion"><b>F</b><small>FUS</small></div><i class="bar"></i></div>
  </div>
  <div class="tray">
    <svg class="t-chev" width="12" height="7" viewBox="0 0 12 7"><path d="M1 6l5-5 5 5" fill="none" stroke="#222" stroke-width="1.300"/></svg>
    <svg width="16" height="13" viewBox="0 0 16 13"><path d="M1 4c4-4 10-4 14 0M3.500 7c3-2.500 6-2.500 9 0M6 9.500c1.500-1 2.500-1 4 0" fill="none" stroke="#222" stroke-width="1.200"/><circle cx="8" cy="12" r="1" fill="#222"/></svg>
    <svg width="16" height="14" viewBox="0 0 16 14"><path d="M1 5h3l4-3v10L4 9H1z" fill="none" stroke="#222"/><path d="M10 4c1.500 2 1.500 4 0 6" fill="none" stroke="#222"/><path d="M12.500 2c2.500 3 2.500 7 0 10" fill="none" stroke="#aaa"/></svg>
    <svg width="16" height="13" viewBox="0 0 16 13"><path d="M1 3h12v9H1z" fill="none" stroke="#222" stroke-width="1.300"/><path d="M14 6h2v3h-2z" fill="#222"/><path d="M6 0L3 7h3l-1 5 5-7H7l1-5z" fill="#222"/></svg>
    <div class="clock"><span>1:35</span><span>09/07/2024</span></div>
    <svg class="t-bell" width="16" height="16" viewBox="0 0 16 16"><path d="M8 0c1 0 1.500 1 1.500 1.500C12 2.500 13 5 13 8c0 2 1 3 2 4v1H1v-1c1-1 2-2 2-4 0-3 1-5.500 3.500-6.500C6.500 1 7 0 8 0zM6 14h4a2 2 0 0 1-4 0z" fill="#0b47a1"/></svg>
  </div>
</footer>
</body>
</html>
```

FILE: styles.css
```css
* { box-sizing: border-box; }
html, body { margin: 0; padding: 0; }
body {
  width: 1920px; height: 1080px; overflow: hidden;
  display: flex; flex-direction: column;
  font-family: "Liberation Sans", Arial, sans-serif;
  background: #fff; color: #333;
}
.defs { display: block; flex: none; }
svg { display: block; flex: none; }

/* caret */
.caret { display: inline-block; width: 0; height: 0; border-left: 3.5px solid transparent; border-right: 3.5px solid transparent; border-top: 4px solid #444; flex: none; }
.caret.dark { border-top-color: #555; }
.caret.light { border-top-color: #a0a0a0; }

/* title bar */
.titlebar { height: 31px; flex: none; display: flex; align-items: center; background: #f3f3f3; border-top: 1px solid #b3b3b3; padding-left: 8px; }
.fus-small { width: 16px; height: 19px; }
.fus-letter { font: bold 10px "Liberation Sans", sans-serif; fill: #fff; text-anchor: middle; }
.apptitle { margin-left: 6px; font: 12px "Liberation Sans", sans-serif; color: #777; }
.winctrl { margin-left: auto; display: flex; gap: 33px; padding-right: 17px; }

/* tab bar */
.tabbar { height: 32px; flex: none; display: flex; align-items: flex-end; background: #c9c9c9; }
.qat { width: 193px; height: 32px; padding-left: 8px; display: flex; align-items: center; }
.qat .caret { margin-left: 4px; }
.q-file { margin-left: 18px; }
.q-save { margin-left: 21px; }
.q-undo { margin-left: 19px; }
.q-redo { margin-left: 14px; }
.hometab { width: 39px; height: 28px; margin-left: 1px; background: #b5b5b5; border-radius: 3px 3px 0 0; display: flex; align-items: center; justify-content: center; padding-top: 4px; }
.doctab { margin-left: 3px; width: 1467px; height: 28px; background: #f3f3f3; border-radius: 3px 3px 0 0; position: relative; display: flex; align-items: center; justify-content: center; }
.doctitle { display: flex; align-items: center; gap: 5px; font-size: 12px; color: #444; margin-right: 12px; }
.docclose { position: absolute; right: 6px; top: 10px; }
.plustab { margin-left: 4px; width: 28px; height: 28px; background: #b5b5b5; border-radius: 3px 3px 0 0; display: flex; align-items: center; justify-content: center; }
.rightbar { height: 32px; display: flex; align-items: center; gap: 17px; padding-left: 12px; }
.help { font: bold 12px "Liberation Sans", sans-serif; fill: #fff; text-anchor: middle; }
.avatar { margin-left: 4px; }

/* ribbon */
.ribbon { height: 82px; flex: none; display: flex; background: #f3f3f3; border-bottom: 2px solid #dedede; }
.design { margin: 11px 0 0 12px; width: 109px; height: 60px; background: #f3f3f3; border: 2px solid #dedede; border-radius: 5px; font: bold 10.500px "Liberation Sans", sans-serif; color: #444; padding: 0 0 2px 2px; display: flex; align-items: center; justify-content: center; gap: 5px; }
.ribbon-main { margin-left: 11px; display: flex; flex-direction: column; }
.tabs { height: 25px; flex: none; display: flex; gap: 21px; padding-left: 6px; }
.tab { height: 23px; padding: 0 13px; font-size: 10px; line-height: 23px; color: #555; }
.tab.active { color: #0f96dc; border-bottom: 3px solid #0f96dc; }
.tab:nth-child(2) { margin-left: -5px; }
.tab:nth-child(4) { margin-left: 1px; }
.tab:nth-child(5) { margin-left: 3px; }
.tab:nth-child(6) { margin-left: 1px; }
.groups { display: flex; height: 55px; flex: none; }
.group { display: flex; flex-direction: column; align-items: center; border-right: 1px solid #dcdcdc; height: 52px; }
.g-select { border-right: 0; }
.g-create { width: 263px; align-items: flex-start; }
.g-modify { width: 269px; }
.g-assemble { width: 140px; }
.g-config { width: 104px; }
.g-construct { width: 94px; }
.g-inspect { width: 109px; }
.g-insert { width: 140px; }
.g-select { width: 110px; }
.tools { height: 41px; flex: none; display: flex; align-items: flex-start; }
.tool { width: 33px; height: 33px; margin: 1px 5px 0; }
.g-create .tools { margin-left: -1px; }
.tool-select { width: 38px; height: 38px; margin-top: -1px; }
.glabel { height: 14px; flex: none; font-size: 10px; line-height: 14px; color: #555; display: flex; align-items: center; gap: 2px; white-space: nowrap; }
.g-create .glabel { align-self: center; margin-right: 5px; }
.g-select .glabel { margin-right: 3px; }
.g-assemble .glabel { letter-spacing: .3px; margin-left: -2px; }
.glabel .caret { margin-top: -2px; }

/* viewport */
.viewport { flex: none; height: 842px; position: relative; overflow: hidden; background: #fff; }
.scene { position: absolute; left: 0; top: 0; }
.gridedge { fill: none; stroke: #8c8c8c; stroke-width: 1; vector-effect: non-scaling-stroke; }
.axis-red { stroke: #f2a6a6; stroke-width: 1.200; fill: none; vector-effect: non-scaling-stroke; }
.axis-green { stroke: #aeeaae; stroke-width: 1.200; fill: none; vector-effect: non-scaling-stroke; }
.gridlabels text { font: bold 8.500px "Liberation Sans", sans-serif; fill: #9a9a9a; }
.carla { font: bold 76px "DejaVu Sans", sans-serif; fill: #6a6a65; stroke: #1e1e1c; stroke-width: 1.100; }
.cube-edge { fill: none; stroke: #8a8a8a; stroke-dasharray: 8 1.500; }
.cube-label { font: bold 8px "Liberation Sans", sans-serif; fill: #a2a2ac; }
.axlabel { font: 12px "Liberation Sans", sans-serif; text-anchor: middle; }
.ax-z { fill: #8282f2; font-size: 14px; }
.ax-x { fill: #f58a8a; }
.ax-y { fill: #8fe88f; }

.panel { position: absolute; left: 4px; width: 300px; height: 24px; background: #f2f2f2; border: 1px solid #c8c8c8; display: flex; align-items: center; padding: 0 11px 0 24px; }
.nav-panel { top: 8px; padding-left: 4px; }
.nav-panel .ptitle { margin-left: 9px; }
.comments-panel { top: 812px; }
.ptitle { font-size: 10.500px; color: #6b7280; }
.pbtn { margin-left: auto; }

.tree { position: absolute; left: 0; top: 37px; margin: 0; padding: 0; list-style: none; display: flex; flex-direction: column; gap: 4px; font-size: 10.500px; color: #333; }
.row { height: 20px; display: flex; align-items: center; }
.r0 { padding-left: 20px; }
.r1 { padding-left: 39px; }
.r2 { padding-left: 76px; }
.arrow { width: 13px; height: 13px; margin-right: 7px; }
.r1 .arrow { margin-right: 6px; }
.pill { height: 20px; background: #f2f2f2; display: flex; align-items: center; padding: 0 9px 0 3px; white-space: nowrap; }
.eye { width: 16px; height: 12px; }
.folder { width: 16px; height: 13px; }
.bodyico { height: 16px; }
.e1 + .folder { margin-left: 9px; }
.lbl { margin-left: 14px; letter-spacing: .15px; }
.gear + .l-config { margin-left: 12px; }
.l-vistas { letter-spacing: .27px; }
.p-root { padding-right: 7px; }
.rootlabel { margin-left: 6px; height: 20px; width: 138px; background: #999; color: #fff; display: flex; align-items: center; }
.rootlabel b { font-size: 11.500px; margin-left: 13px; }
.cubeico { width: 18px; height: 18px; margin-left: 1px; }
.radio { margin-left: 4px; }
.gear { margin-left: 0; }
.f0 { margin-left: 0; }

.vnav { position: absolute; left: 842px; top: 810px; width: 236px; height: 25px; background: #f2f2f2; display: flex; align-items: center; gap: 5px; padding-left: 2px; }
.vn { width: 18px; height: 18px; }
.m3 { margin-left: 3px; }
.caret.narrow { margin-left: -3px; }

/* timeline */
.timeline { height: 46px; flex: none; background: #f3f3f3; border-top: 1px solid #e0e0e0; border-bottom: 1px solid #b5b9bd; display: flex; align-items: flex-start; padding-left: 9px; }
.player { display: flex; gap: 11px; margin-top: 16px; }
.player svg { width: 14px; height: 14px; }
.history { margin-left: 22px; margin-top: 13px; display: flex; flex-direction: column; gap: 4px; }
.hist-icons { display: flex; gap: 8px; }
.hist-icons svg { width: 16px; height: 16px; }
.bracket { width: 170px; height: 8px; margin-left: 9px; }
.marker { margin-left: -1px; margin-top: 8px; }
.gear-right { margin-left: auto; margin-right: 14px; margin-top: 15px; }

/* taskbar */
.taskbar { flex: 1; display: flex; align-items: center; background: linear-gradient(90deg, #e1e9f5 0%, #dbe5f4 45%, #d8e3f2 60%, #e4edf6 100%); padding-left: 683px; }
.winlogo { width: 23px; height: 23px; }
.search { margin-left: 13px; width: 219px; height: 30px; border-radius: 15px; background: #f6f8fc; border: 1px solid #d6dbe6; display: flex; align-items: center; gap: 9px; padding-left: 11px; font: 13px "Noto Sans", sans-serif; color: #555; }
.apps { display: flex; margin-left: 3px; height: 48px; }
.app { width: 44px; height: 48px; position: relative; display: flex; align-items: center; justify-content: center; }
.app.active::before { content: ""; position: absolute; left: 3px; top: 5px; width: 38px; height: 38px; border-radius: 4px; background: #eef2f9; }
.prime { position: relative; width: 24px; height: 24px; background: #1a98e0; color: #0b2540; font: bold 8px/8px "Liberation Sans", sans-serif; display: flex; align-items: center; justify-content: center; text-align: center; }
.dot { position: absolute; left: 19px; bottom: 4px; width: 6px; height: 3px; border-radius: 2px; background: #70767e; }
.bar { position: absolute; left: 15px; bottom: 3px; width: 15px; height: 3px; border-radius: 2px; background: #0a78d4; }
.tg { margin-left: 4px; }
.badge { position: absolute; right: 2px; top: 6px; padding: 0 2px; background: #888; color: #fff; font-size: 9px; line-height: 11px; border-radius: 2px; }
.chromebadge { position: absolute; right: 6px; top: 5px; }
.fusion { position: relative; width: 24px; height: 26px; background: linear-gradient(#f58220 0 68%, #8a3d10 68%); border-radius: 2px; color: #fff; text-align: center; display: flex; flex-direction: column; align-items: center; }
.fusion b { font-size: 14px; line-height: 17px; }
.fusion small { font-size: 6px; line-height: 8px; }
.tray { margin-left: auto; display: flex; align-items: center; gap: 7px; padding-right: 20px; }
.t-chev { margin-right: 11px; }
.clock { margin-left: 14px; display: flex; flex-direction: column; align-items: flex-end; font: 11.500px/16px "Noto Sans", sans-serif; color: #222; }
.t-bell { margin-left: 0; }
```
